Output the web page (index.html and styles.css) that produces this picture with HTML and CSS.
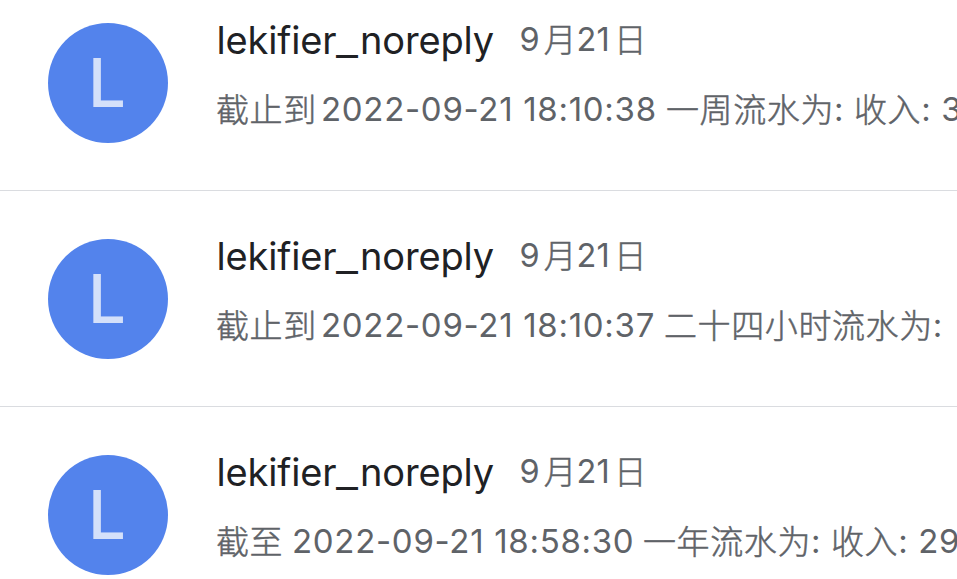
FILE: index.html
```html
<!DOCTYPE html>
<html lang="zh-CN">
<head>
<meta charset="utf-8">
<title>Inbox</title>
<link rel="stylesheet" href="styles.css">
</head>
<body>
<main class="list">
  <article class="mail">
    <div class="avatar"><span>L</span></div>
    <div class="body">
      <div class="head"><span class="sender">lekifier<span class="underscore">_</span>noreply</span><span class="date">9<i class="month">月</i>21<i class="day">日</i></span></div>
      <p class="snippet"><span class="cjk lead">截止到</span><span class="num stamp">2022-09-21 18:10:38</span><span class="cjk">一周流水为</span><span class="num colon">:</span><span class="cjk">收入</span><span class="num colon">:</span><span class="num">3</span></p>
    </div>
  </article>
  <article class="mail">
    <div class="avatar"><span>L</span></div>
    <div class="body">
      <div class="head"><span class="sender">lekifier<span class="underscore">_</span>noreply</span><span class="date">9<i class="month">月</i>21<i class="day">日</i></span></div>
      <p class="snippet"><span class="cjk lead">截止到</span><span class="num stamp narrow">2022-09-21 18:10:37</span><span class="cjk">二十四小时流水为</span><span class="num colon">:</span></p>
    </div>
  </article>
  <article class="mail">
    <div class="avatar"><span>L</span></div>
    <div class="body">
      <div class="head"><span class="sender">lekifier<span class="underscore">_</span>noreply</span><span class="date">9<i class="month">月</i>21<i class="day">日</i></span></div>
      <p class="snippet"><span class="cjk lead short">截至</span><span class="num stamp late">2022-09-21 18:58:30</span><span class="cjk">一年流水为</span><span class="num colon">:</span><span class="cjk">收入</span><span class="num colon">:</span><span class="num">29</span></p>
    </div>
  </article>
</main>
</body>
</html>
```
FILE: styles.css
```css
* { box-sizing: border-box; }
body {
  margin: 0;
  background: #fff;
  color: #202124;
  font-family: Inter, "Noto Sans CJK SC", sans-serif;
  overflow: hidden;
}
.list { height: 579px; overflow: hidden; }
.mail {
  display: flex;
  gap: 48px;
  height: 216px;
  padding: 22px 0 0 48px;
}
.mail:first-child { height: 191px; }
.mail + .mail { padding-top: 47px; }
.mail:not(:last-child) { border-bottom: 1px solid #dadce0; }
.avatar {
  flex: none;
  width: 120px;
  height: 120px;
  margin-top: 1px;
  padding-right: 2px;
  border-radius: 50%;
  background: #5383ec;
  color: #d4e0fa;
  font: 500 67px/120px Inter, sans-serif;
  text-align: center;
}
.body { flex: 1; min-width: 0; white-space: nowrap; }
.head { display: flex; height: 36px; line-height: 36px; }
.sender { width: 303px; padding-left: 0.5px; font-size: 38px; letter-spacing: -0.15px; }
.underscore {
  display: inline-block;
  width: 22.5px;
  transform: translateY(1px) scaleX(1.27);
  transform-origin: left;
  margin-right: 1px;
}
.date { display: flex; padding-left: 0.5px; color: #5f6368; font-size: 32.5px; letter-spacing: 0.2px; }
.date i {
  font-style: normal;
  font-family: "Noto Sans CJK SC", sans-serif;
  font-weight: 300;
  -webkit-text-stroke: 0.5px #5f6368;
  margin-top: -2px;
}
.month { margin: 0 0 0 4px; }
.day { margin-left: 4px; }
.snippet {
  display: flex;
  margin: 33px 0 0;
  height: 36px;
  line-height: 36px;
  color: #5f6368;
  font-size: 33px;
}
.snippet span { flex: none; }
.num { letter-spacing: 0.7px; }
.cjk {
  font-family: "Noto Sans CJK SC", sans-serif;
  font-weight: 300;
  letter-spacing: 0.6px;
  -webkit-text-stroke: 0.5px #5f6368;
  margin-top: -1px;
}
.lead { width: 105px; }
.short { width: 76px; }
.stamp { width: 345px; }
.narrow { width: 343px; }
.late { width: 351px; }
.colon { width: 20px; }
```
